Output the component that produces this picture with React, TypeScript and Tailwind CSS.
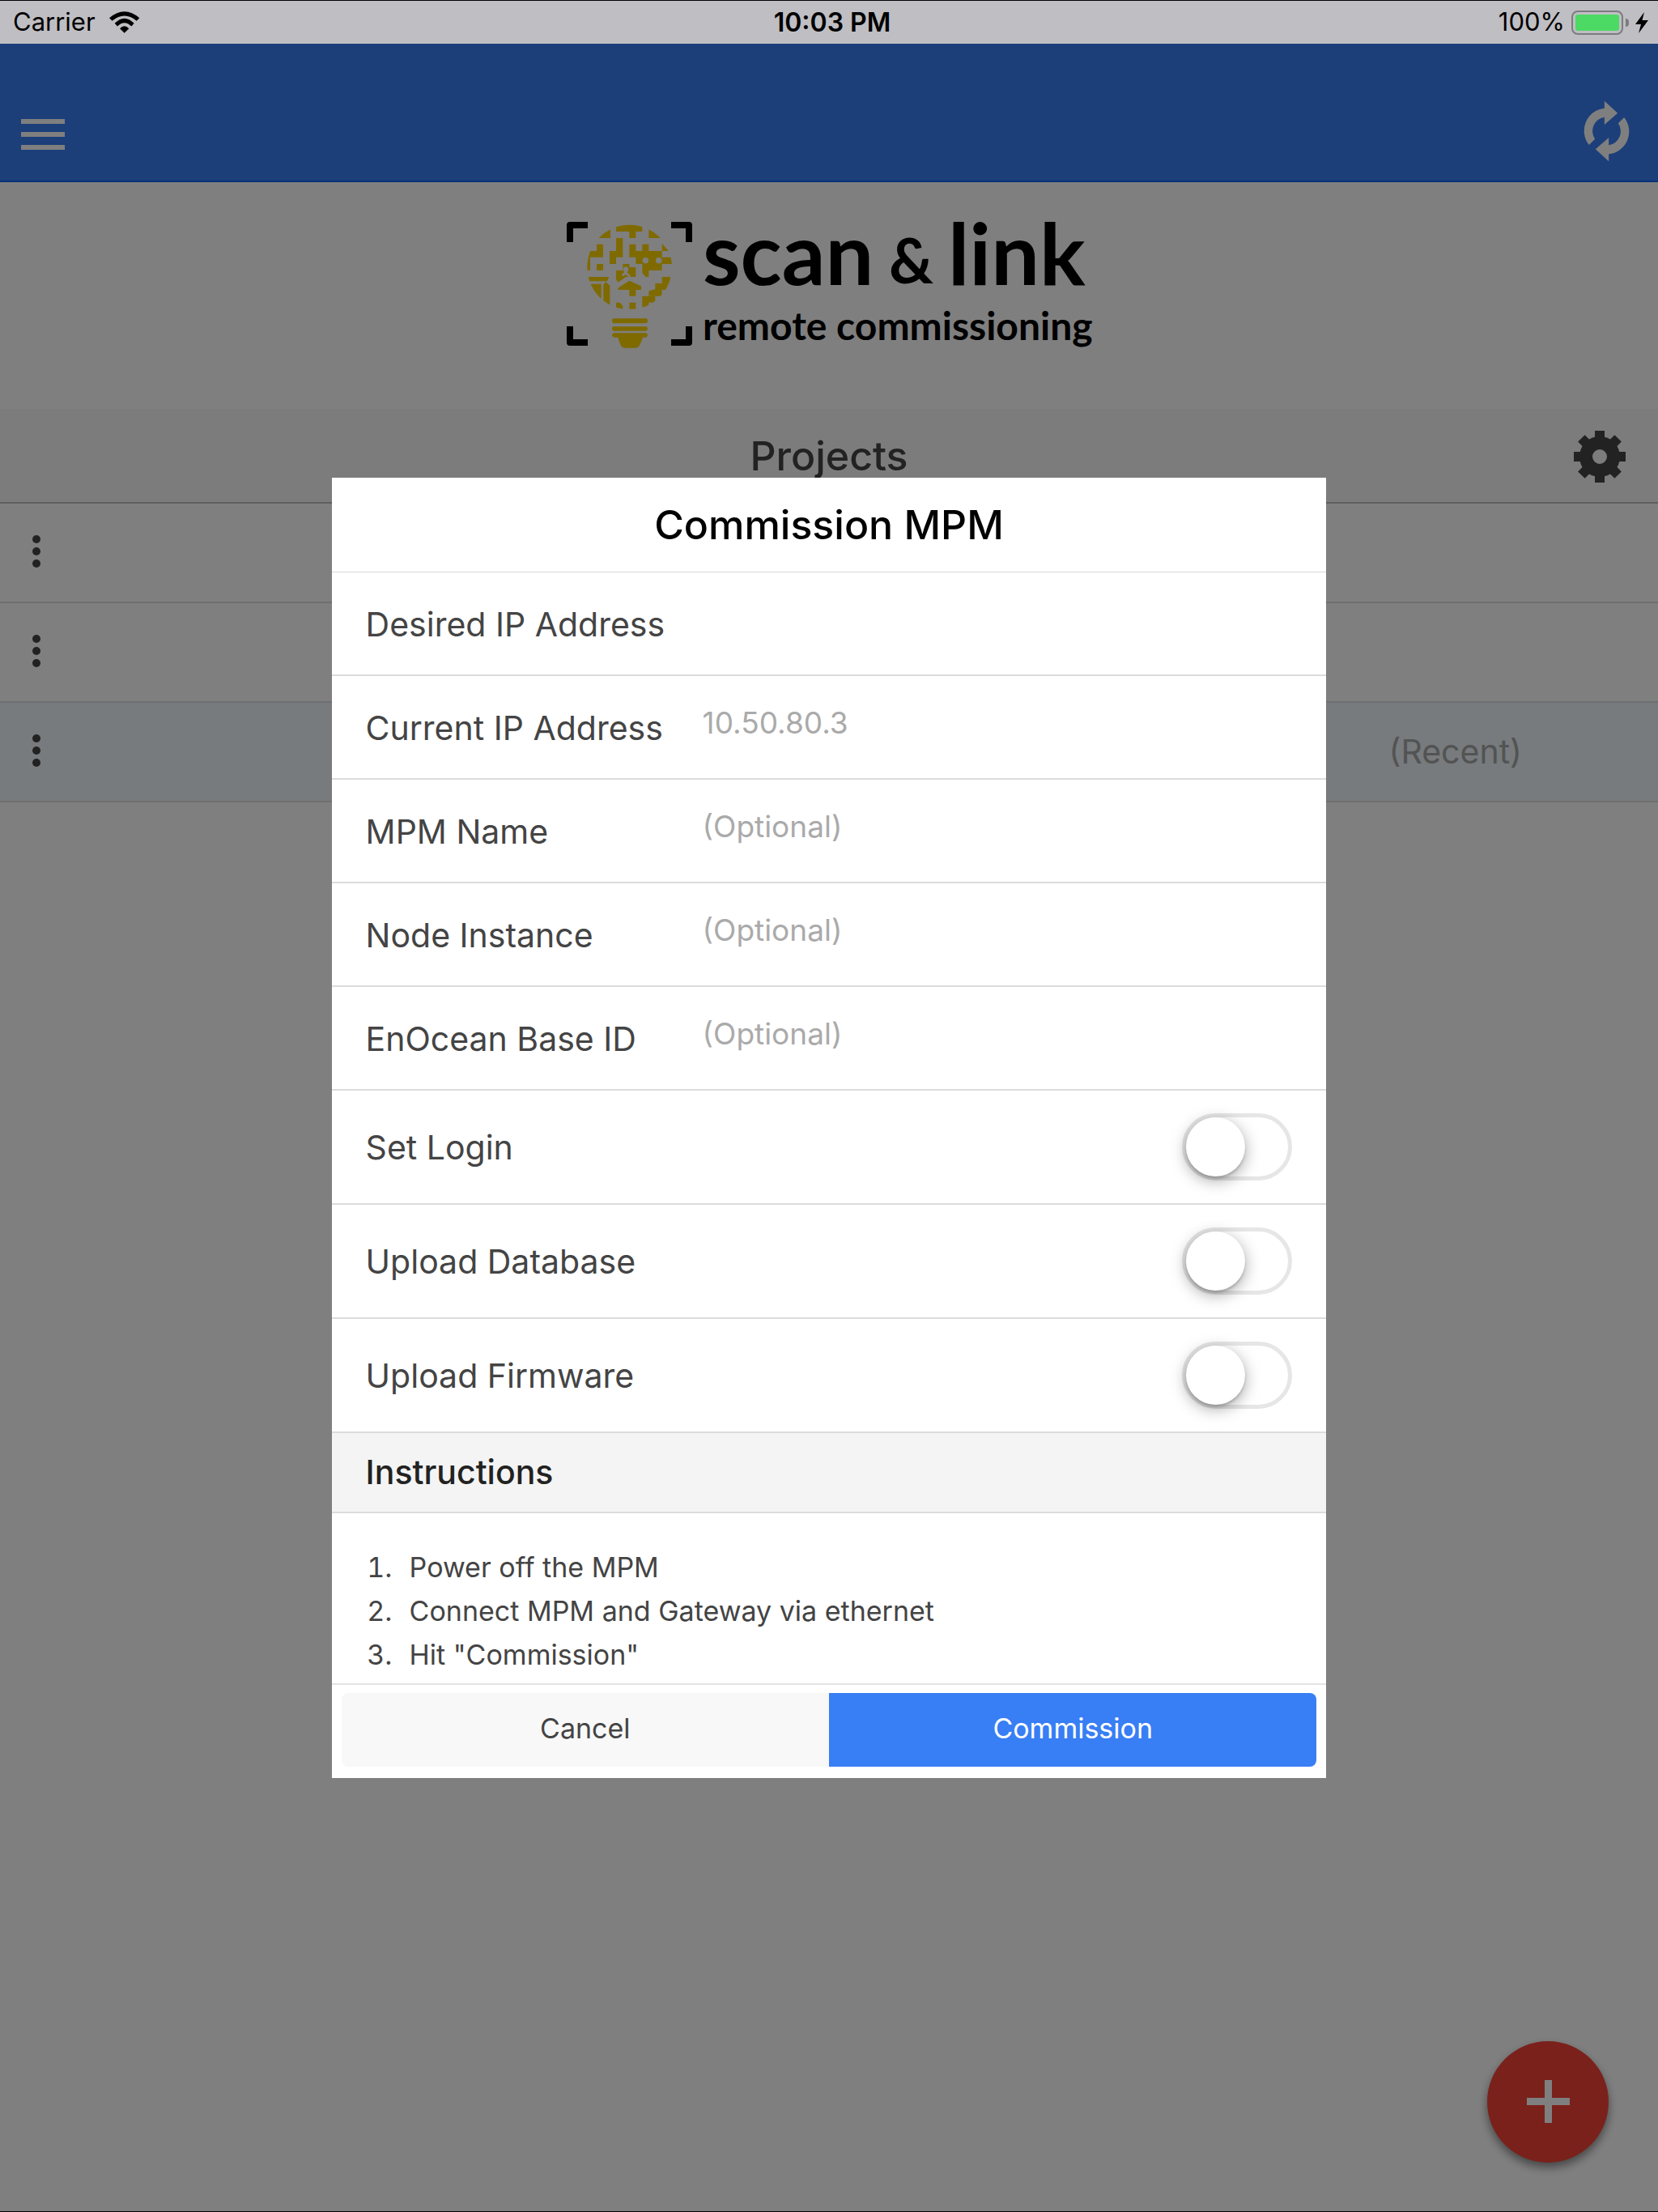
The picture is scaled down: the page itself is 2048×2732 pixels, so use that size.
import { useState } from "react";

const textFields = [
  { id: "desiredIp", label: "Desired IP Address", placeholder: "" },
  { id: "currentIp", label: "Current IP Address", placeholder: "10.50.80.3" },
  { id: "mpmName", label: "MPM Name", placeholder: "(Optional)" },
  { id: "nodeInstance", label: "Node Instance", placeholder: "(Optional)" },
  { id: "baseId", label: "EnOcean Base ID", placeholder: "(Optional)" },
];

const toggleFields = [
  { id: "setLogin", label: "Set Login" },
  { id: "uploadDatabase", label: "Upload Database" },
  { id: "uploadFirmware", label: "Upload Firmware" },
];

const instructions = [
  "Power off the MPM",
  "Connect MPM and Gateway via ethernet",
  'Hit "Commission"',
];

const projects = [
  { id: 1, recent: false },
  { id: 2, recent: false },
  { id: 3, recent: true },
];

function WifiIcon() {
  return (
    <svg viewBox="401 39 120 86" className="h-[29px] w-[40px]" aria-hidden="true">
      <path d="M404 66Q460 18 516 66L505 77Q460 39 415 77Z" />
      <path d="M424 86Q460 50 496 86L486 97Q460 71 434 97Z" />
      <path d="M443 105Q460 88 477 105L460 122Z" />
    </svg>
  );
}

function LoopIcon() {
  const arrow =
    "M643 538A84 84 0 0 1 700 402V375L749 420L700 463V435A52 52 0 0 0 665 516Z";
  return (
    <svg viewBox="620 370 176 234" className="h-[78px] w-[59px] fill-white" aria-hidden="true">
      <path d={arrow} />
      <path d={arrow} transform="rotate(180 708 487)" />
    </svg>
  );
}

function GearIcon() {
  return (
    <svg viewBox="-33 -33 66 66" className="size-[66px] fill-[#444]" aria-hidden="true">
      <circle r="17" fill="none" stroke="#444" strokeWidth="16" />
      {[0, 45, 90, 135, 180, 225, 270, 315].map((angle) => (
        <rect key={angle} x="-6" y="-32" width="12" height="10" transform={`rotate(${angle})`} />
      ))}
    </svg>
  );
}

function Logo() {
  return (
    <svg
      viewBox="0 -36 654 210"
      className="h-[210px] w-[654px]"
      role="img"
      aria-label="scan & link remote commissioning"
    >
      {/* scan frame corners */}
      <g fill="none" stroke="#000" strokeWidth="8" strokeLinejoin="round">
        <path d="M7 29V8H29" />
        <path d="M132 8H154V29" />
        <path d="M7 133V153H29" />
        <path d="M132 153H154V133" />
      </g>
      <clipPath id="bulb">
        <circle cx="173" cy="180" r="157" />
      </clipPath>
      <g transform="translate(23 0) scale(.3333)" fill="#ffd400">
        <g clipPath="url(#bulb)">
          <path d="M123 20H220V48H196V72H172V48H123Z" />
          <path d="M55 72V40H102V72Z" />
          <path d="M244 40H290V72H244Z" />
          <path d="M123 72H148V143H123V168H99V120H123Z" />
          <path d="M51 95H75V143H27V192H10V120H51Z" />
          <path d="M51 168H75V192H51Z" />
          <path d="M172 95H196V120H220V95H244V120H293V192H244V216H232L220 200V168H196V143H172Z" />
          <path d="M293 92L318 120H293Z" />
          <path d="M293 143H335V168H293Z" />
          <path d="M148 168H172V180H196V216H160L130 236L123 225V192H148Z" />
          <path d="M130 257L172 230L216 250V264H196V287H172V264H130Z" />
          <path d="M15 216H97L90 232H15Z" />
          <path d="M25 242H68V305H25Z" />
          <path d="M76 246L84 234L100 248V325H76Z" />
          <path d="M123 311H138L148 325V340H123Z" />
          <path d="M172 311H196V335H172Z" />
          <path d="M220 287H268V311H244V340H220Z" />
          <path d="M293 216H325V264H293V287H244V268L268 262V240H293Z" />
          <g fill="#fff">
            <circle cx="232" cy="155" r="11" />
            <circle cx="281" cy="155" r="11" />
            <path d="M150 192a10 10 0 1 1 18 0l-4 8 14 12-6 5-14-11-8 8-7-6 10-9Z" />
          </g>
        </g>
        <rect x="108" y="370" width="132" height="18" rx="7" />
        <rect x="108" y="400" width="132" height="16" rx="7" />
        <path d="M114 424H234Q246 432 234 440H222Q210 479 198 479H152Q140 479 130 440H114Q102 432 114 424Z" />
      </g>
      <g className="font-['Lato'] font-bold" fill="#000">
        <text x="171" y="82" fontSize="106">scan</text>
        <text x="401" y="80" fontSize="76">&amp;</text>
        <text x="474" y="82" fontSize="106">link</text>
        <text x="171" y="150" fontSize="48">remote commissioning</text>
      </g>
    </svg>
  );
}

function StatusBar() {
  return (
    <div className="grid h-[54px] grid-cols-3 items-center border-t border-black bg-[#bfbec3] text-[31px] text-black">
      <div className="flex items-center gap-4 pl-4">
        <span>Carrier</span>
        <WifiIcon />
      </div>
      <span className="pl-2 text-center text-[32px] font-semibold">10:03 PM</span>
      <div className="flex items-center justify-end pr-3">
        <span>100%</span>
        <div className="ml-2 h-[30px] w-16 rounded-lg border-2 border-[#7c7b80] p-[3px]">
          <div className="h-full rounded-[3px] bg-[#4cd964]" />
        </div>
        <div className="ml-[3px] h-2.5 w-1 rounded-r-full bg-[#7c7b80]" />
        <svg viewBox="0 0 16 28" className="ml-2 h-7 w-4" aria-hidden="true">
          <path d="M11 1L0 16H7L4 27L16 11H8.500Z" />
        </svg>
      </div>
    </div>
  );
}

function ProjectRow({ recent }: { recent: boolean }) {
  return (
    <li
      className={`flex h-[123px] items-center justify-between border-b-2 border-[#dedede] pr-[168px] pl-8 ${
        recent ? "bg-[#eef6fc]" : "bg-white"
      }`}
    >
      <button type="button" aria-label="Project options" className="flex flex-col gap-[5px] px-2 pb-1">
        <span className="size-2.5 rounded-full bg-[#444]" />
        <span className="size-2.5 rounded-full bg-[#444]" />
        <span className="size-2.5 rounded-full bg-[#444]" />
      </button>
      {recent && <span className="text-[41px] text-[#a6a6a6]">(Recent)</span>}
    </li>
  );
}

function CommissionModal() {
  const [values, setValues] = useState<Record<string, string>>({});
  const [toggles, setToggles] = useState<Record<string, boolean>>({});

  return (
    <form
      role="dialog"
      aria-labelledby="modal-title"
      onSubmit={(e) => e.preventDefault()}
      className="w-3/5 bg-white text-[#444]"
    >
      <h2
        id="modal-title"
        className="flex h-[117px] items-center justify-center border-b border-[#d8d8d8] pt-0.5 text-[50px] font-medium text-black"
      >
        Commission MPM
      </h2>

      {textFields.map(({ id, label, placeholder }) => (
        <div key={id} className="flex h-32 items-center border-b-2 border-[#dcdcdc] px-[42px]">
          <label htmlFor={id} className="w-[416px] shrink-0 pt-1 text-[41px]">
            {label}
          </label>
          <input
            id={id}
            type="text"
            placeholder={placeholder}
            value={values[id] ?? ""}
            onChange={(e) => setValues({ ...values, [id]: e.target.value })}
            className="min-w-0 flex-1 pb-2.5 text-[37px] outline-none placeholder:text-[#aaa]"
          />
        </div>
      ))}

      {toggleFields.map(({ id, label }) => (
        <div
          key={id}
          className="flex h-[141px] items-center justify-between border-b-2 border-[#dcdcdc] px-[42px]"
        >
          <label htmlFor={id} className="pt-1 text-[41px]">
            {label}
          </label>
          <input
            id={id}
            type="checkbox"
            checked={toggles[id] ?? false}
            onChange={(e) => setToggles({ ...toggles, [id]: e.target.checked })}
            className="h-[83px] w-[136px] appearance-none rounded-full border-[5px] border-[#e6e6e6] bg-white before:block before:size-[73px] before:rounded-full before:bg-white before:shadow-[0_5px_19px_rgba(0,0,0,0.35),0_3px_3px_rgba(0,0,0,0.15)] before:transition-transform checked:border-[#387ef5] checked:bg-[#387ef5] checked:before:translate-x-[53px]"
          />
        </div>
      ))}

      <h3 className="flex h-[99px] items-center border-b-2 border-[#dcdcdc] bg-[#f4f4f4] px-[42px] pt-0.5 text-[41px] font-medium text-[#222]">
        Instructions
      </h3>
      <ol className="list-decimal pt-10 pr-[42px] pb-2 pl-21 text-[34px] leading-[54px]">
        {instructions.map((step) => (
          <li key={step} className="pl-3">
            {step}
          </li>
        ))}
      </ol>

      <div className="flex border-t-2 border-[#e4e4e4] px-3 pt-2.5 pb-3.5 text-[34px]">
        <button type="button" className="h-[91px] flex-1 rounded-l-lg bg-[#f8f8f8] pb-1">
          Cancel
        </button>
        <button type="submit" className="h-[91px] flex-1 rounded-r-lg bg-[#387ef5] pb-1 text-white">
          Commission
        </button>
      </div>
    </form>
  );
}

export default function App() {
  return (
    <div className="flex min-h-screen flex-col border-b border-black bg-white font-['Inter',sans-serif]">
      <StatusBar />

      <div className="relative flex flex-1 flex-col">
        <header className="flex h-[171px] items-end justify-between border-b-2 border-[#0c60ee] bg-[#387ef5] pr-[34px] pb-[22px] pl-[26px]">
          <button type="button" aria-label="Menu" className="flex flex-col gap-2.5 pb-4">
            <span className="h-1.5 w-[54px] bg-white" />
            <span className="h-1.5 w-[54px] bg-white" />
            <span className="h-1.5 w-[54px] bg-white" />
          </button>
          <button type="button" aria-label="Refresh">
            <LoopIcon />
          </button>
        </header>

        <div className="flex h-[280px] justify-center pt-[9px]">
          <Logo />
        </div>

        <div className="grid h-[117px] grid-cols-[1fr_auto_1fr] items-center border-b-2 border-[#bebebe] bg-[#f8f8f8] px-[39px] pt-0.5">
          <h1 className="col-start-2 text-[50px] font-medium text-[#444]">Projects</h1>
          <button type="button" aria-label="Settings" className="justify-self-end">
            <GearIcon />
          </button>
        </div>
        <ul>
          {projects.map((project) => (
            <ProjectRow key={project.id} recent={project.recent} />
          ))}
        </ul>

        <button
          type="button"
          aria-label="Add project"
          className="absolute right-[61px] bottom-[60px] flex size-[150px] items-center justify-center rounded-full bg-[#f44336] pb-0.5 shadow-[0_6px_12px_rgba(0,0,0,0.45)]"
        >
          <svg viewBox="0 0 53 53" className="size-[53px] fill-white" aria-hidden="true">
            <path d="M22 0H31V22H53V31H31V53H22V31H0V22H22Z" />
          </svg>
        </button>

        {/* backdrop stops below the status bar */}
        <div className="absolute inset-0 flex items-center justify-center bg-black/50">
          <CommissionModal />
        </div>
      </div>
    </div>
  );
}
